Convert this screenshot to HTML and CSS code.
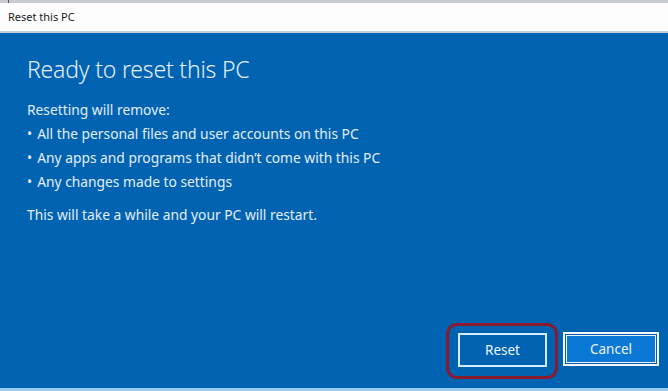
FILE: index.html
```html
<!DOCTYPE html>
<html>
<head>
<meta charset="utf-8">
<link rel="stylesheet" href="styles.css">
</head>
<body>
<div class="window">
  <div class="topline"><span class="tick"></span></div>
  <div class="titlebar">Reset this PC</div>
  <div class="dialog">
    <h1 class="heading">Ready to reset this PC</h1>
    <p class="lead">Resetting will remove:</p>
    <ul class="items">
      <li>All the personal files and user accounts on this PC</li>
      <li>Any apps and programs that didn’t come with this PC</li>
      <li>Any changes made to settings</li>
    </ul>
    <p class="note">This will take a while and your PC will restart.</p>
    <div class="actions">
      <span class="ring"><button class="btn btn-reset">Reset</button></span>
      <button class="btn btn-cancel">Cancel</button>
    </div>
  </div>
  <div class="bottomline"></div>
</div>
</body>
</html>
```

FILE: styles.css
```css
html, body {
  margin: 0;
  padding: 0;
}
body {
  width: 668px;
  height: 391px;
  overflow: hidden;
  font-family: "Noto Sans", "Open Sans", sans-serif;
  background: #0063b1;
}
.window {
  display: flex;
  flex-direction: column;
  height: 391px;
}
.topline {
  height: 3px;
  background: #c8ccd2;
  display: flex;
}
.tick {
  width: 1px;
  height: 3px;
  margin-left: 8px;
  background: #555;
}
.titlebar {
  height: 28px;
  background: #fdfdfd;
  border-bottom: 2px solid #c4d0dc;
  padding-left: 8px;
  font-size: 11px;
  line-height: 28px;
  color: #222;
}
.dialog {
  flex: 1;
  display: flex;
  flex-direction: column;
  padding: 0 0 0 27px;
  color: #e4eef8;
}
.heading {
  margin: 20px 0 0 0;
  font-weight: 300;
  font-size: 23px;
  line-height: 32px;
  letter-spacing: -0.2px;
}
.lead {
  margin: 13px 0 0 0;
  font-size: 13.8px;
  line-height: 24px;
}
.items {
  margin: 0;
  padding: 0;
  list-style: none;
  font-size: 13.8px;
  line-height: 24px;
}
.items li::before {
  content: "•";
  margin-right: 5px;
}
.note {
  margin: 9px 0 0 0;
  font-size: 13.8px;
  line-height: 24px;
}
.actions {
  margin-top: auto;
  margin-bottom: 9px;
  display: flex;
  justify-content: flex-end;
  align-items: flex-start;
  padding-right: 9px;
  gap: 5px;
}
.ring {
  display: flex;
  border: 3px solid #8a1a2e;
  border-radius: 11px;
  padding: 7px 8px 9px 9px;
}
.btn {
  font-family: "Noto Sans", "Open Sans", sans-serif;
  font-size: 13.5px;
  color: #eef5fc;
  height: 34px;
  padding: 0;
  cursor: default;
}
.btn-reset {
  width: 89px;
  background: #0063b1;
  border: 2px solid #d4eeff;
}
.btn-cancel {
  margin-top: 9px;
  width: 96px;
  background: #0a78d4;
  border: 2px solid #f4f8fc;
  box-shadow: inset 0 0 0 1px #0a5aa8, inset 0 0 0 2px #e8f2fc;
}
.bottomline {
  height: 3px;
  background: #9acbf2;
}
```
